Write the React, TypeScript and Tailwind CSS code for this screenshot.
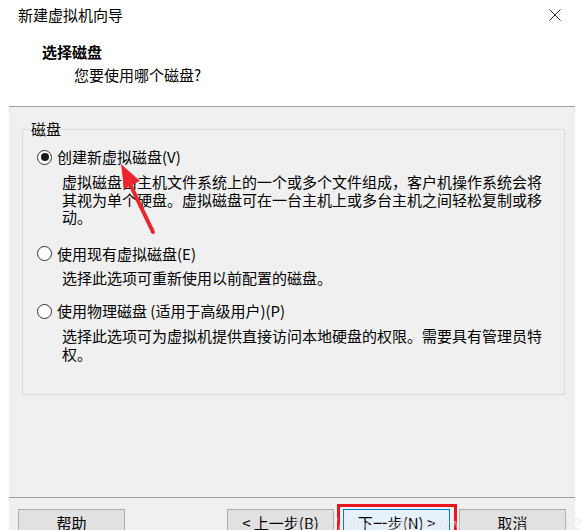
import React from 'react';

const font = { fontFamily: '"Noto Sans CJK SC", "Noto Sans", sans-serif' };

const Radio: React.FC<{ checked?: boolean }> = ({ checked }) => (
  <span className="flex h-[15px] w-[15px] shrink-0 items-center justify-center rounded-full border border-[#333333] bg-white">
    {checked && <span className="h-[8px] w-[8px] rounded-full bg-[#1a1a1a]" />}
  </span>
);

const Option: React.FC<{ label: string; checked?: boolean; className?: string }> = ({ label, checked, className }) => (
  <div className={`flex h-[20px] items-center pl-[14px] ${className ?? ''}`}>
    <Radio checked={checked} />
    <span className="ml-[5px] text-[15px] leading-[20px] text-black">{label}</span>
  </div>
);

const Desc: React.FC<{ children: React.ReactNode; className?: string }> = ({ children, className }) => (
  <p className={`pl-[39px] pr-[16px] text-[15px] leading-[17.5px] text-black ${className ?? ''}`}>{children}</p>
);

const Button: React.FC<{ label: string; primary?: boolean }> = ({ label, primary }) => (
  <button
    className={`h-[28px] w-[107px] border text-[15px] leading-[20px] text-black ${
      primary ? 'border-[#0078d7] bg-[#e5f1fb]' : 'border-[#adadad] bg-[#e1e1e1]'
    }`}
  >
    {label}
  </button>
);

const App: React.FC = () => {
  return (
    <div className="relative h-[530px] w-[581px] overflow-hidden bg-white" style={font}>
      <div className="ml-[9px] w-[566px]">
        {/* header */}
        <div className="h-[107px] border-b border-[#a0a0a0] bg-white">
          <div className="flex items-center justify-between pt-[5px] pl-[9px] pr-[14px]">
            <span className="text-[15px] leading-[20px] text-black">新建虚拟机向导</span>
            <svg width="12" height="12" viewBox="0 0 12 12" className="-mt-[1px]">
              <path d="M0.5 0.5 L11.5 11.5 M11.5 0.5 L0.5 11.5" stroke="#222" strokeWidth="1" fill="none" />
            </svg>
          </div>
          <div className="mt-[17px] pl-[33px] text-[15px] font-bold leading-[20px] text-black">选择磁盘</div>
          <div className="mt-[3px] pl-[65px] text-[15px] leading-[20px] text-black">您要使用哪个磁盘?</div>
        </div>

        {/* body */}
        <div className="h-[390px] bg-[#f0f0f0] pt-[22px] pl-[13px]">
          <div className="relative h-[266px] w-[543px] border border-[#dcdcdc]">
            <span className="absolute -top-[11px] left-[7px] bg-[#f0f0f0] px-[1px] text-[15px] leading-[20px] text-black">
              磁盘
            </span>
            <Option label="创建新虚拟磁盘(V)" checked className="mt-[17px]" />
            <Desc className="mt-[6px]">
              虚拟磁盘由主机文件系统上的一个或多个文件组成，客户机操作系统会将其视为单个硬盘。虚拟磁盘可在一台主机上或多台主机之间轻松复制或移动。
            </Desc>
            <Option label="使用现有虚拟磁盘(E)" className="mt-[18px]" />
            <Desc className="mt-[5px]">选择此选项可重新使用以前配置的磁盘。</Desc>
            <Option label="使用物理磁盘 (适用于高级用户)(P)" className="mt-[15px]" />
            <Desc className="mt-[6px]">
              选择此选项可为虚拟机提供直接访问本地硬盘的权限。需要具有管理员特权。
            </Desc>
          </div>
        </div>

        {/* footer */}
        <div className="flex h-[33px] items-start justify-between border-t border-[#a0a0a0] bg-[#f0f0f0] px-[9px] pt-[11px]">
          <Button label="帮助" />
          <div className="flex gap-[9px]">
            <Button label="< 上一步(B)" />
            <div className="relative">
              <Button label="下一步(N) >" primary />
              <span className="absolute -top-[5px] -bottom-[5px] -left-[6px] -right-[7px] border-[3px] border-[#e8141f]" />
            </div>
            <Button label="取消" />
          </div>
        </div>
      </div>

      {/* annotation arrow */}
      <svg className="pointer-events-none absolute left-0 top-0" width="581" height="530">
        <line x1="153" y1="232" x2="129" y2="182" stroke="#e8262b" strokeWidth="4" strokeLinecap="round" />
        <polygon points="121,164 140,181 124,189" fill="#e8262b" />
      </svg>

      {/* watermark */}
      <span
        className="pointer-events-none absolute left-[292px] top-[514px] whitespace-nowrap text-[17px] leading-[22px] text-[#e6e6e6] opacity-50"
        style={{ fontFamily: '"Liberation Sans", sans-serif' }}
      >
        https://blog.csdn.net/weixin_44065312
      </span>
    </div>
  );
};

export default App;
